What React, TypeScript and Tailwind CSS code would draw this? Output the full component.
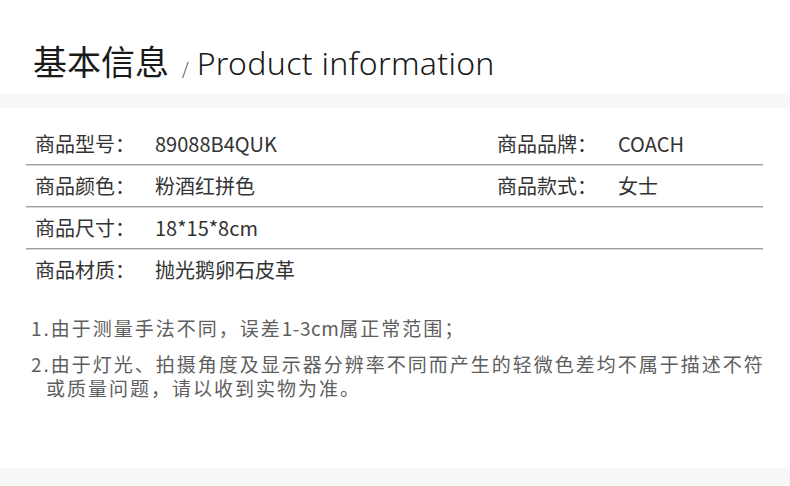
import React from "react";

const rows = [
  { label: "商品型号：", value: "89088B4QUK", label2: "商品品牌：", value2: "COACH" },
  { label: "商品颜色：", value: "粉酒红拼色", label2: "商品款式：", value2: "女士" },
  { label: "商品尺寸：", value: "18*15*8cm" },
  { label: "商品材质：", value: "抛光鹅卵石皮革" },
];

const cjk = { fontFamily: '"Noto Sans CJK SC", "Noto Sans", sans-serif' };

export default function App() {
  return (
    <div className="w-[790px] h-[486px] bg-white overflow-hidden flex flex-col" style={cjk}>
      {/* 标题 */}
      <div className="h-[93px] pt-[41px] pl-[33px] flex items-baseline text-[#1a1a1a]">
        <span className="text-[34px] leading-[40px] font-normal">基本信息</span>
        <span className="text-[17px] ml-[13px] mr-[8px] font-light text-[#333]">/</span>
        <span
          className="text-[32px] leading-[40px] font-light tracking-[0.3px]"
          style={{ fontFamily: '"Noto Sans", sans-serif' }}
        >
          Product information
        </span>
      </div>
      <div className="h-[15px] bg-[#f8f8f8]" />

      {/* 参数表 */}
      <div className="mt-[16px] ml-[26px] w-[737px] text-[20px] text-[#333]">
        {rows.map((r, i) => (
          <div key={i}>
            <div className="h-[40px] flex items-center pl-[9px]">
              <span className="w-[120px] shrink-0">{r.label}</span>
              <span className="w-[342px] shrink-0">{r.value}</span>
              {r.label2 && <span className="w-[121px] shrink-0">{r.label2}</span>}
              {r.value2 && <span>{r.value2}</span>}
            </div>
            {i < rows.length - 1 && <div className="h-px bg-[#9f9f9f] border-b border-[#d4d4d4] box-content" />}
          </div>
        ))}
      </div>

      {/* 说明 */}
      <div className="mt-[26px] pl-[31px] text-[19px] leading-[24px] text-[#5e5e5e] tracking-[2px] whitespace-nowrap">
        <p>
          1.由于测量手法不同，误差<span className="tracking-[0.5px]">1-3cm</span>属正常范围；
        </p>
        <p className="mt-[12px]">2.由于灯光、拍摄角度及显示器分辨率不同而产生的轻微色差均不属于描述不符</p>
        <p className="pl-[15px]">或质量问题，请以收到实物为准。</p>
      </div>

      <div className="flex-1" />
      <div className="h-[18px] bg-[#f8f8f8]" />
    </div>
  );
}
